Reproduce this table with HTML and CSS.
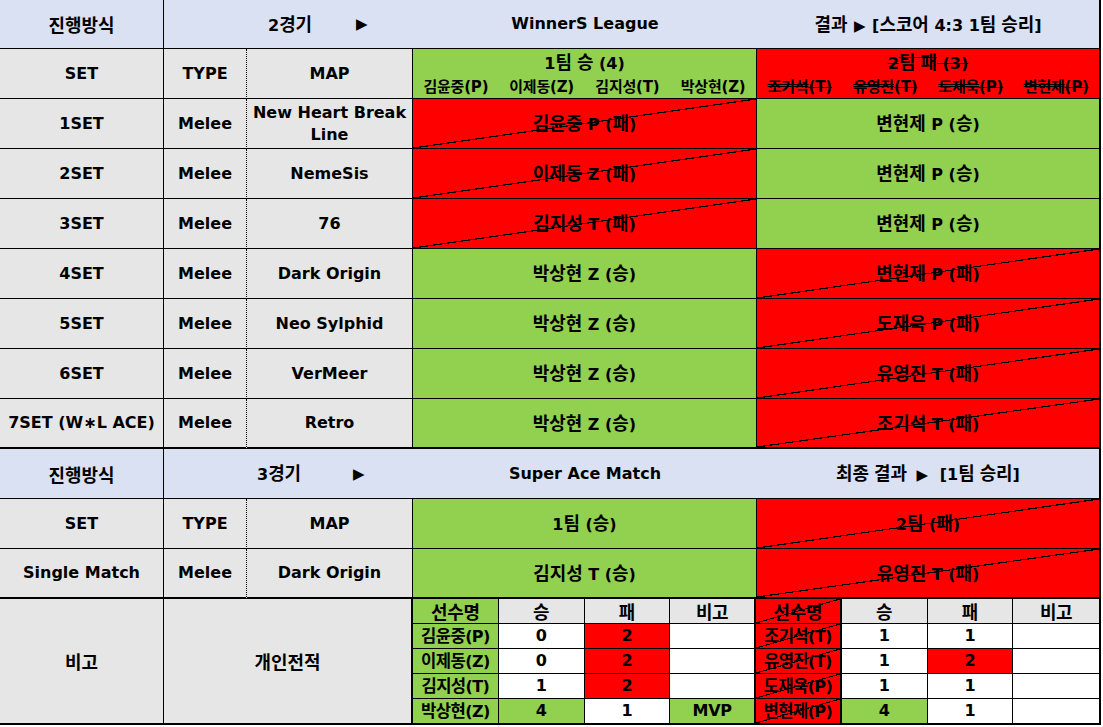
FILE: index.html
```html
<!DOCTYPE html>
<html lang="ko">
<head>
<meta charset="utf-8">
<title>WinnerS League</title>
<link rel="stylesheet" href="styles.css">
</head>
<body>
<div class="sheet">
  <!-- row 1 -->
  <div class="c lav"><span class="k">진행방식</span></div>
  <div class="c lav span2 noline stage s2"><span>2<span class="k">경기</span></span><span class="tri">▶</span></div>
  <div class="c lav noline">WinnerS League</div>
  <div class="c lav last"><span class="t"><span class="k">결과</span> <span class="tri tri-in">▶</span> [<span class="k">스코어</span> 4:3 1<span class="k">팀 승리</span>]</span></div>

  <!-- row 2 -->
  <div class="c gray">SET</div>
  <div class="c gray dot">TYPE</div>
  <div class="c gray">MAP</div>
  <div class="c green team-head">
    <div class="th-title"><span class="t">1<span class="k">팀 승</span> (4)</span></div>
    <div class="th-names"><span><span class="k">김윤중</span>(P)</span><span><span class="k">이제동</span>(Z)</span><span><span class="k">김지성</span>(T)</span><span><span class="k">박상현</span>(Z)</span></div>
  </div>
  <div class="c red team-head last strike">
    <div class="th-title"><span class="t">2<span class="k">팀 패</span> (3)</span></div>
    <div class="th-names"><span><span class="k">조기석</span>(T)</span><span><span class="k">유영진</span>(T)</span><span><span class="k">도재욱</span>(P)</span><span><span class="k">변현제</span>(P)</span></div>
  </div>

  <!-- sets -->
  <div class="c gray">1SET</div>
  <div class="c gray dot">Melee</div>
  <div class="c gray map">New Heart Break Line</div>
  <div class="c red diag"><span class="t"><span class="k">김윤중</span> P (<span class="k">패</span>)</span></div>
  <div class="c green last"><span class="t"><span class="k">변현제</span> P (<span class="k">승</span>)</span></div>

  <div class="c gray">2SET</div>
  <div class="c gray dot">Melee</div>
  <div class="c gray">NemeSis</div>
  <div class="c red diag"><span class="t"><span class="k">이제동</span> Z (<span class="k">패</span>)</span></div>
  <div class="c green last"><span class="t"><span class="k">변현제</span> P (<span class="k">승</span>)</span></div>

  <div class="c gray">3SET</div>
  <div class="c gray dot">Melee</div>
  <div class="c gray">76</div>
  <div class="c red diag"><span class="t"><span class="k">김지성</span> T (<span class="k">패</span>)</span></div>
  <div class="c green last"><span class="t"><span class="k">변현제</span> P (<span class="k">승</span>)</span></div>

  <div class="c gray">4SET</div>
  <div class="c gray dot">Melee</div>
  <div class="c gray">Dark Origin</div>
  <div class="c green"><span class="t"><span class="k">박상현</span> Z (<span class="k">승</span>)</span></div>
  <div class="c red diag last"><span class="t"><span class="k">변현제</span> P (<span class="k">패</span>)</span></div>

  <div class="c gray">5SET</div>
  <div class="c gray dot">Melee</div>
  <div class="c gray">Neo Sylphid</div>
  <div class="c green"><span class="t"><span class="k">박상현</span> Z (<span class="k">승</span>)</span></div>
  <div class="c red diag last"><span class="t"><span class="k">도재욱</span> P (<span class="k">패</span>)</span></div>

  <div class="c gray">6SET</div>
  <div class="c gray dot">Melee</div>
  <div class="c gray">VerMeer</div>
  <div class="c green"><span class="t"><span class="k">박상현</span> Z (<span class="k">승</span>)</span></div>
  <div class="c red diag last"><span class="t"><span class="k">유영진</span> T (<span class="k">패</span>)</span></div>

  <div class="c gray tb">7SET (W∗L ACE)</div>
  <div class="c gray dot tb">Melee</div>
  <div class="c gray tb">Retro</div>
  <div class="c green tb"><span class="t"><span class="k">박상현</span> Z (<span class="k">승</span>)</span></div>
  <div class="c red diag last tb"><span class="t"><span class="k">조기석</span> T (<span class="k">패</span>)</span></div>

  <!-- ace header -->
  <div class="c lav"><span class="k">진행방식</span></div>
  <div class="c lav span2 noline stage s3"><span>3<span class="k">경기</span></span><span class="tri">▶</span></div>
  <div class="c lav noline">Super Ace Match</div>
  <div class="c lav last"><span class="t"><span class="k">최종 결과</span> <span class="tri tri-gap">▶</span> [1<span class="k">팀 승리</span>]</span></div>

  <div class="c gray">SET</div>
  <div class="c gray dot">TYPE</div>
  <div class="c gray">MAP</div>
  <div class="c green"><span class="t">1<span class="k">팀</span> (<span class="k">승</span>)</span></div>
  <div class="c red diag last"><span class="t">2<span class="k">팀</span> (<span class="k">패</span>)</span></div>

  <div class="c gray tb">Single Match</div>
  <div class="c gray dot tb">Melee</div>
  <div class="c gray tb">Dark Origin</div>
  <div class="c green tb"><span class="t"><span class="k">김지성</span> T (<span class="k">승</span>)</span></div>
  <div class="c red diag last tb"><span class="t"><span class="k">유영진</span> T (<span class="k">패</span>)</span></div>

  <!-- notes -->
  <div class="c gray tb"><span class="k">비고</span></div>
  <div class="c gray span2 tb thickr"><span class="k">개인전적</span></div>
  <div class="sub">
    <div class="s green"><span class="k">선수명</span></div>
    <div class="s gray"><span class="k">승</span></div>
    <div class="s gray"><span class="k">패</span></div>
    <div class="s gray thickr"><span class="k">비고</span></div>
    <div class="s red diag thickr"><span class="k">선수명</span></div>
    <div class="s gray"><span class="k">승</span></div>
    <div class="s gray"><span class="k">패</span></div>
    <div class="s gray end"><span class="k">비고</span></div>

    <div class="s green nm"><span class="t"><span class="k">김윤중</span>(P)</span></div>
    <div class="s white">0</div>
    <div class="s red">2</div>
    <div class="s white thickr"></div>
    <div class="s red diag thickr nm"><span class="t"><span class="k">조기석</span>(T)</span></div>
    <div class="s white">1</div>
    <div class="s white">1</div>
    <div class="s white end"></div>

    <div class="s green nm"><span class="t"><span class="k">이제동</span>(Z)</span></div>
    <div class="s white">0</div>
    <div class="s red">2</div>
    <div class="s white thickr"></div>
    <div class="s red diag thickr nm"><span class="t"><span class="k">유영진</span>(T)</span></div>
    <div class="s white">1</div>
    <div class="s red">2</div>
    <div class="s white end"></div>

    <div class="s green nm"><span class="t"><span class="k">김지성</span>(T)</span></div>
    <div class="s white">1</div>
    <div class="s red">2</div>
    <div class="s white thickr"></div>
    <div class="s red diag thickr nm"><span class="t"><span class="k">도재욱</span>(P)</span></div>
    <div class="s white">1</div>
    <div class="s white">1</div>
    <div class="s white end"></div>

    <div class="s green bottom nm"><span class="t"><span class="k">박상현</span>(Z)</span></div>
    <div class="s green bottom">4</div>
    <div class="s white bottom">1</div>
    <div class="s green bottom thickr">MVP</div>
    <div class="s red diag bottom thickr nm"><span class="t"><span class="k">변현제</span>(P)</span></div>
    <div class="s green bottom">4</div>
    <div class="s white bottom">1</div>
    <div class="s white bottom end"></div>
  </div>
</div>
</body>
</html>
```

FILE: styles.css
```css
html, body {
  margin: 0;
  padding: 0;
  background: #ffffff;
}

.sheet {
  display: grid;
  grid-template-columns: 164px 83px 166px 344px 344px;
  grid-template-rows: 49px repeat(11, 50px) 126px;
  width: 1101px;
  font-family: "DejaVu Sans", "Noto Sans CJK KR", sans-serif;
  font-weight: bold;
  font-size: 16px;
  color: #000;
}

.k {
  font-family: "Noto Sans CJK KR", sans-serif;
  font-size: 1.12em;
  font-weight: bold;
}

.t {
  white-space: nowrap;
}

.c {
  box-sizing: border-box;
  border-right: 1px solid #000;
  border-bottom: 1px solid #000;
  display: flex;
  align-items: center;
  justify-content: center;
  text-align: center;
  line-height: 22px;
  white-space: nowrap;
  min-height: 0;
  overflow: hidden;
}

.map {
  white-space: normal;
  padding: 0 4px;
}

.lav { background: #dae1f2; }
.gray { background: #e6e6e6; }
.green { background: #92d050; }
.red { background: #ff0000; }
.white { background: #ffffff; }

.span2 { grid-column: span 2; }
.noline { border-right: none; }
.last { border-right: 2px solid #000; }
.dot { border-right: 1px dotted #000; }
.tb { border-bottom: 2px solid #000; }
.thickr { border-right: 2px solid #000; }

.diag {
  background-color: #ff0000;
  background-image: linear-gradient(to bottom right,
    transparent calc(50% - 0.6px),
    #000 calc(50% - 0.6px),
    #000 calc(50% + 0.6px),
    transparent calc(50% + 0.6px));
}

.stage {
  justify-content: flex-start;
}
.s2 { padding-left: 104px; }
.s2 .tri { margin-left: 44px; }
.s3 { padding-left: 93px; }
.s3 .tri { margin-left: 52px; }

.tri {
  font-family: "DejaVu Sans", sans-serif;
  font-size: 15px;
  display: inline-block;
}
.tri-in { margin: 0 1px; }
.tri-gap { margin: 0 6px 0 4px; }

.team-head {
  flex-direction: column;
  align-items: stretch;
  justify-content: flex-start;
}
.th-title {
  height: 25px;
  display: flex;
  align-items: center;
  justify-content: center;
  padding-top: 1px;
}
.th-names {
  height: 24px;
  display: grid;
  grid-template-columns: repeat(4, 1fr);
  align-items: center;
  font-size: 15px;
  letter-spacing: -0.2px;
}
.th-names .k {
  font-size: 1em;
}
.strike .th-title .t,
.strike .th-names span {
  text-decoration: line-through;
}

.sub {
  grid-column: span 2;
  box-sizing: border-box;
  border-right: 2px solid #000;
  border-bottom: 2px solid #000;
  display: grid;
  grid-template-columns: repeat(8, 1fr);
  grid-template-rows: 25px 25px 25px 25px 24px;
  min-height: 0;
}

.s {
  box-sizing: border-box;
  border-right: 1px solid #000;
  border-bottom: 1px solid #000;
  display: flex;
  align-items: center;
  justify-content: center;
  white-space: nowrap;
  letter-spacing: -0.3px;
  line-height: 20px;
  min-height: 0;
  overflow: hidden;
}
.s .k { line-height: 20px; }
.s.nm {
  letter-spacing: -0.6px;
}
.s.nm .k {
  font-size: 1.04em;
}
.s.thickr { border-right: 2px solid #000; }
.s.end { border-right: none; }
.s.bottom { border-bottom: none; }
```
